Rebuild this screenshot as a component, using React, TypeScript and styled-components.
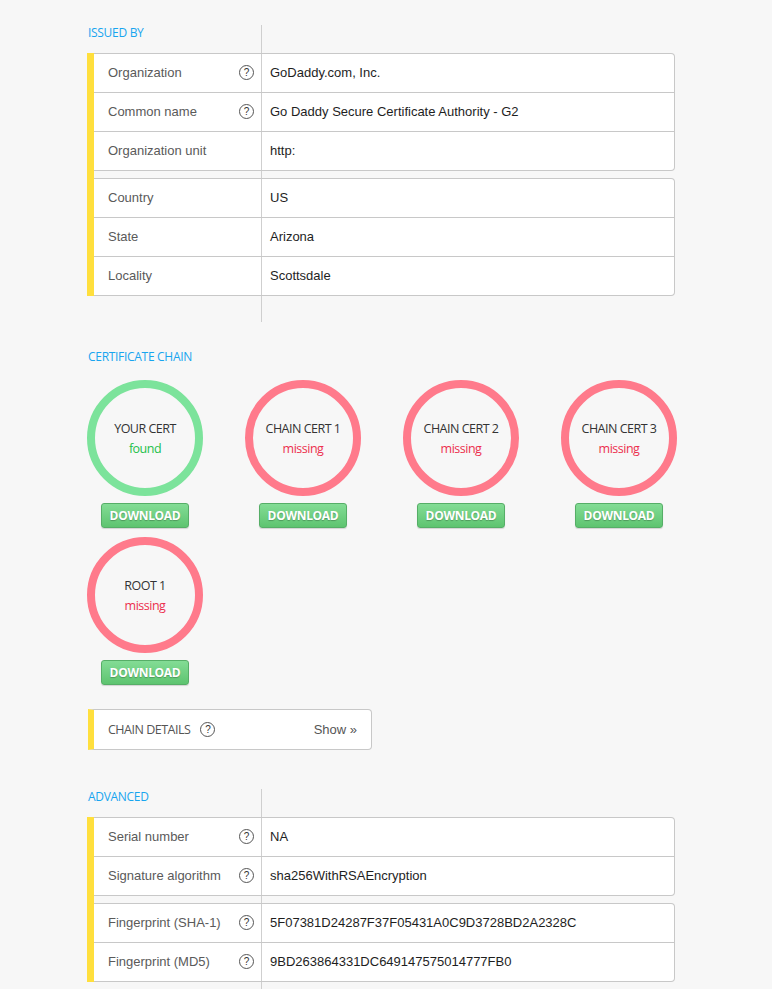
import styled, { createGlobalStyle } from "styled-components"

const GlobalStyle = createGlobalStyle`
  html, body {
    margin: 0;
    padding: 0;
    background: #f7f7f7;
  }
`

type Row = { label: string; value: string; help?: boolean }

const issuedBy: Row[][] = [
  [
    { label: "Organization", value: "GoDaddy.com, Inc.", help: true },
    { label: "Common name", value: "Go Daddy Secure Certificate Authority - G2", help: true },
    { label: "Organization unit", value: "http:" },
  ],
  [
    { label: "Country", value: "US" },
    { label: "State", value: "Arizona" },
    { label: "Locality", value: "Scottsdale" },
  ],
]

const advanced: Row[][] = [
  [
    { label: "Serial number", value: "NA", help: true },
    { label: "Signature algorithm", value: "sha256WithRSAEncryption", help: true },
  ],
  [
    { label: "Fingerprint (SHA-1)", value: "5F07381D24287F37F05431A0C9D3728BD2A2328C", help: true },
    { label: "Fingerprint (MD5)", value: "9BD263864331DC649147575014777FB0", help: true },
  ],
]

const chain = [
  { name: "YOUR CERT", found: true },
  { name: "CHAIN CERT 1", found: false },
  { name: "CHAIN CERT 2", found: false },
  { name: "CHAIN CERT 3", found: false },
  { name: "ROOT 1", found: false },
]

const Help = () => <HelpIcon>?</HelpIcon>

const InfoTable = ({ groups }: { groups: Row[][] }) => (
  <Table>
    {groups.map((group, gi) => (
      <Group key={gi}>
        {group.map((row) => (
          <TableRow key={row.label}>
            <LabelCell>
              <span>{row.label}</span>
              {row.help && <Help />}
            </LabelCell>
            <ValueCell>{row.value}</ValueCell>
          </TableRow>
        ))}
      </Group>
    ))}
  </Table>
)

const App = () => {
  return (
    <>
      <GlobalStyle />
      <Page>
        <Section $divider>
          <SectionTitle>ISSUED BY</SectionTitle>
          <InfoTable groups={issuedBy} />
        </Section>

        <Section $spaceAfter={12}>
          <SectionTitle $gap={31}>CERTIFICATE CHAIN</SectionTitle>
          <ChainGrid>
            {chain.map((c) => (
              <ChainItem key={c.name}>
                <Ring $found={c.found}>
                  <RingName>{c.name}</RingName>
                  <RingStatus $found={c.found}>{c.found ? "found" : "missing"}</RingStatus>
                </Ring>
                <DownloadButton type="button">DOWNLOAD</DownloadButton>
              </ChainItem>
            ))}
          </ChainGrid>
          <ChainDetails>
            <DetailsLabel>
              CHAIN DETAILS
              <Help />
            </DetailsLabel>
            <ShowLink>Show »</ShowLink>
          </ChainDetails>
        </Section>

        <Section $divider>
          <SectionTitle>ADVANCED</SectionTitle>
          <InfoTable groups={advanced} />
        </Section>
      </Page>
    </>
  )
}

const Page = styled.div`
  padding: 25px 0 40px 87px;
  width: 588px;
  display: flex;
  flex-direction: column;
  gap: 27px;
`

const Section = styled.section<{ $divider?: boolean; $spaceAfter?: number }>`
  padding-bottom: ${(p) => (p.$divider ? "26px" : "0")};
  margin-bottom: ${(p) => p.$spaceAfter ?? 0}px;
  background: ${(p) =>
    p.$divider ? "linear-gradient(#cfcfcf, #cfcfcf) no-repeat 174px 0 / 1px 100%" : "none"};
`

const SectionTitle = styled.h3<{ $gap?: number }>`
  margin: 0 0 ${(p) => (p.$gap ?? 28) - 15}px 1px;
  font-family: "Open Sans", sans-serif;
  font-weight: 400;
  font-size: 12px;
  line-height: 15px;
  letter-spacing: -0.3px;
  color: #18a5ef;
`

const Table = styled.div`
  border-left: 7px solid #ffdf3d;
  display: flex;
  flex-direction: column;
  gap: 7px;
`

const Group = styled.div`
  background: #fff;
  border: 1px solid #c8c8c8;
  border-left: none;
  border-radius: 0 4px 4px 0;
`

const TableRow = styled.div`
  display: grid;
  grid-template-columns: 168px 1fr;
  height: 38px;
  border-bottom: 1px solid #c8c8c8;
  &:last-child {
    border-bottom: none;
  }
`

const LabelCell = styled.div`
  display: flex;
  align-items: center;
  justify-content: space-between;
  padding: 0 7px 1px 14px;
  border-right: 1px solid #cfcfcf;
  font-family: "Liberation Sans", Arial, sans-serif;
  font-size: 13px;
  color: #5a5a5a;
`

const ValueCell = styled.div`
  display: flex;
  align-items: center;
  padding: 0 0 1px 8px;
  font-family: "Liberation Sans", Arial, sans-serif;
  font-size: 13px;
  color: #1e1e1e;
`

const HelpIcon = styled.span`
  display: inline-flex;
  align-items: center;
  justify-content: center;
  width: 13px;
  height: 13px;
  border: 1px solid #555;
  border-radius: 50%;
  font-family: "Liberation Sans", Arial, sans-serif;
  font-size: 10px;
  color: #333;
  line-height: 1;
`

const ChainGrid = styled.div`
  display: grid;
  grid-template-columns: repeat(4, 116px);
  column-gap: 42px;
  row-gap: 9px;
`

const ChainItem = styled.div`
  display: flex;
  flex-direction: column;
  align-items: center;
  gap: 7px;
`

const Ring = styled.div<{ $found: boolean }>`
  box-sizing: border-box;
  width: 116px;
  height: 116px;
  padding-top: 2px;
  border-radius: 50%;
  border: 8px solid ${(p) => (p.$found ? "#7ce39b" : "#ff7a8b")};
  display: flex;
  flex-direction: column;
  align-items: center;
  justify-content: center;
  font-family: "Open Sans", sans-serif;
  font-size: 12.5px;
  line-height: 20px;
  letter-spacing: -0.5px;
`

const RingName = styled.span`
  color: #333;
`

const RingStatus = styled.span<{ $found: boolean }>`
  color: ${(p) => (p.$found ? "#22c04a" : "#ec2f4e")};
`

const DownloadButton = styled.button`
  box-sizing: border-box;
  width: 88px;
  height: 25px;
  padding: 0;
  border: 1px solid #56ae67;
  border-radius: 3px;
  background: linear-gradient(#83dc95, #5ec470);
  box-shadow: 0 1px 1px rgba(0, 0, 0, 0.15);
  color: #fff;
  font-family: "Open Sans", sans-serif;
  font-weight: 700;
  font-size: 12px;
  letter-spacing: -0.3px;
  text-shadow: 0 1px 1px rgba(0, 0, 0, 0.25);
  cursor: pointer;
`

const ChainDetails = styled.div`
  box-sizing: border-box;
  margin: 24px 0 0 1px;
  width: 284px;
  height: 41px;
  display: flex;
  align-items: center;
  justify-content: space-between;
  padding: 0 14px 0 14px;
  background: #fff;
  border: 1px solid #c8c8c8;
  border-left: 6px solid #ffdf3d;
  border-radius: 0 4px 4px 0;
`

const DetailsLabel = styled.span`
  display: flex;
  align-items: center;
  gap: 10px;
  font-family: "Open Sans", sans-serif;
  font-size: 12.5px;
  letter-spacing: -0.5px;
  color: #555;
`

const ShowLink = styled.span`
  font-family: "Liberation Sans", Arial, sans-serif;
  font-size: 13px;
  color: #555;
  cursor: pointer;
`

export default App
